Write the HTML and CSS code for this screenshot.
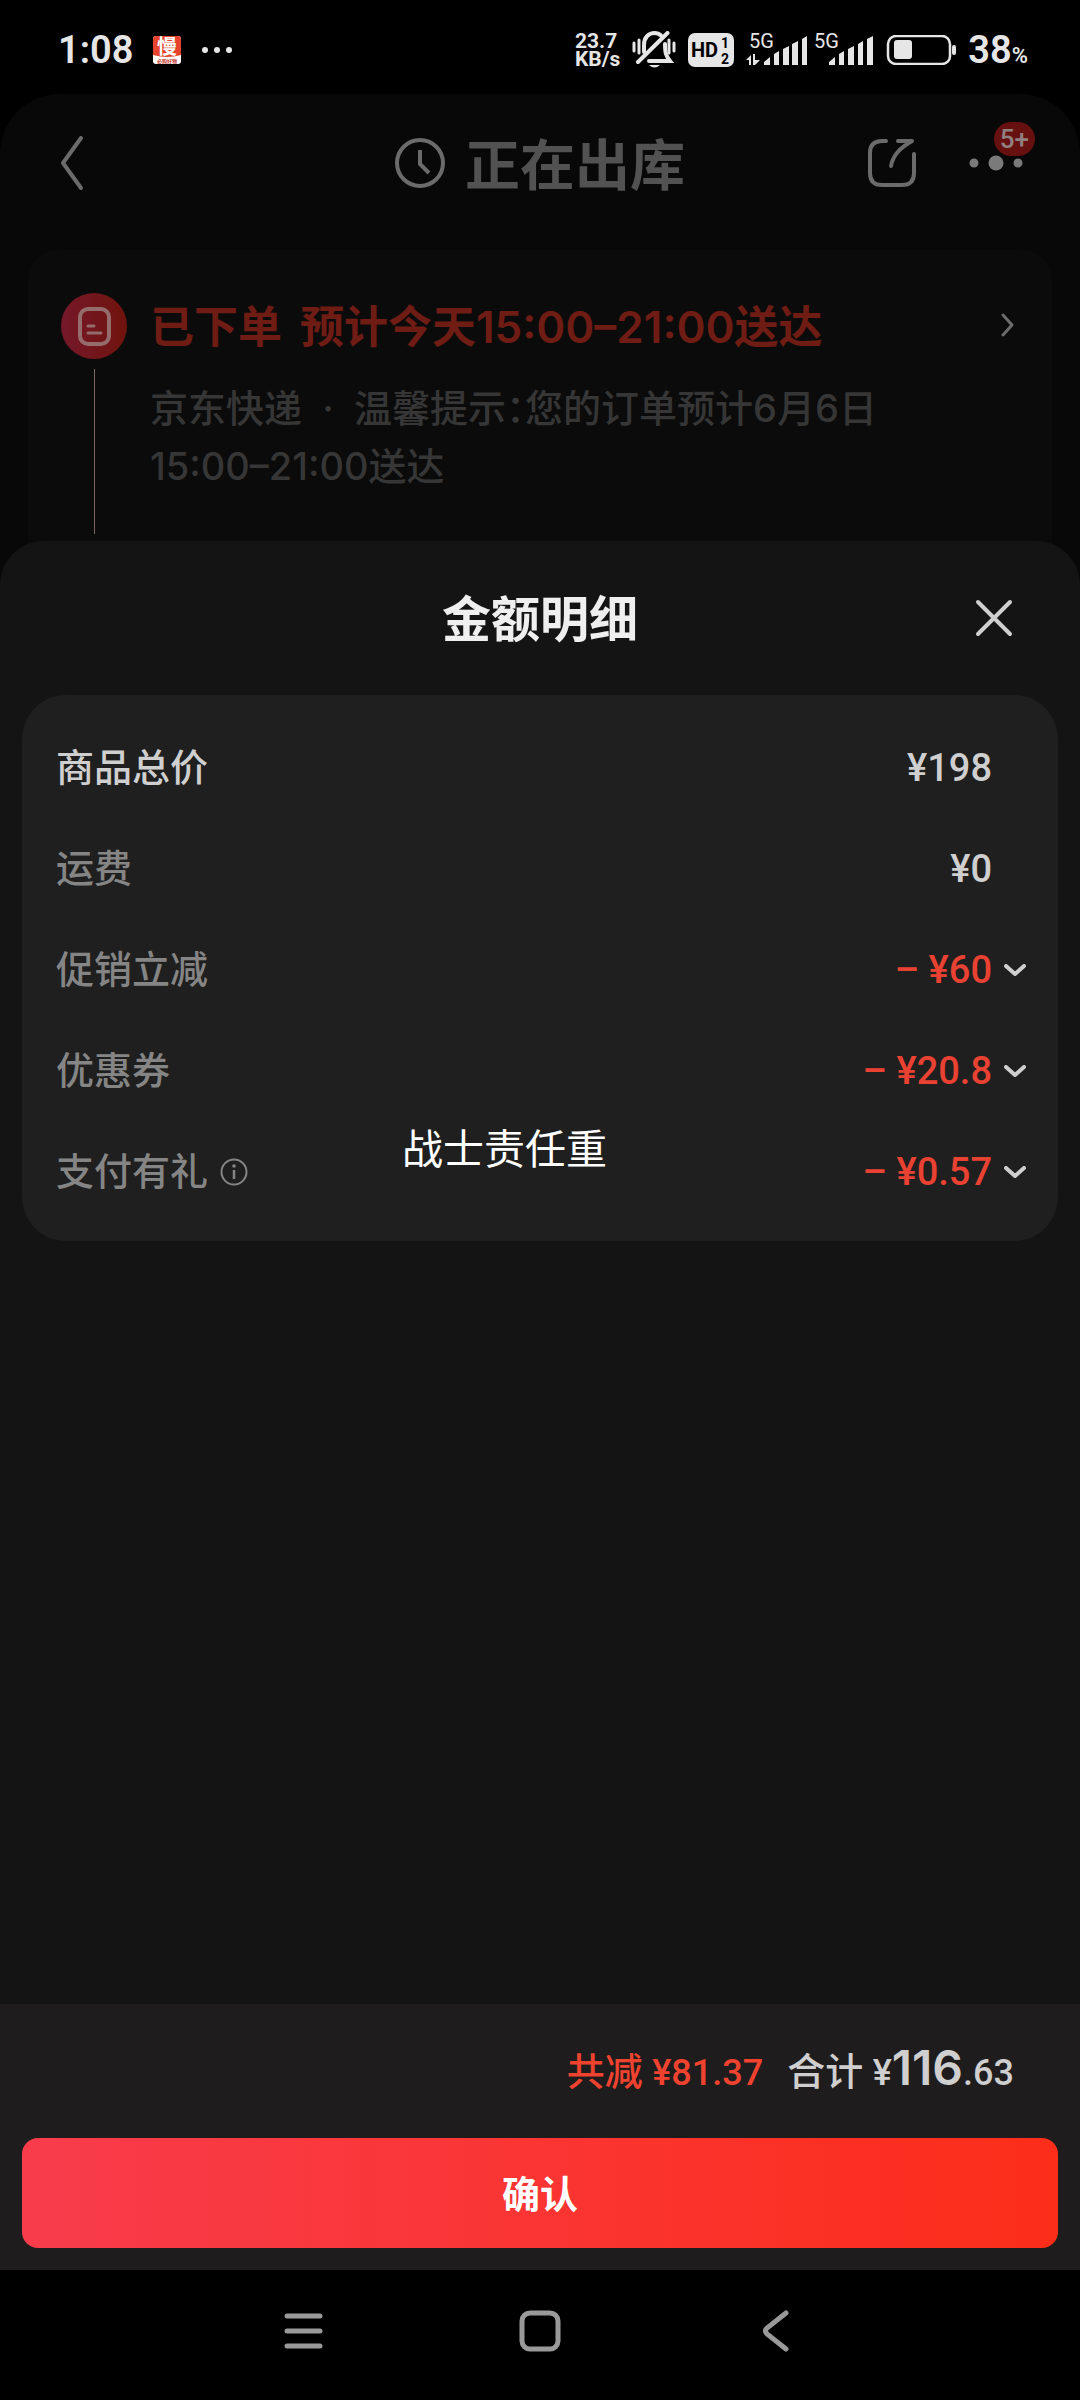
FILE: index.html
```html
<!DOCTYPE html>
<html lang="zh-CN">
<head>
  <meta charset="UTF-8">
  <meta name="viewport" content="width=device-width, initial-scale=1.0">
  <title>金额明细</title>
  <link rel="stylesheet" href="styles.css">
</head>
<body>
  <div class="status-bar">
    <div class="status-left">
      <span class="clock">1:08</span>
      <svg class="app-icon" width="28" height="28" viewBox="0 0 28 28">
        <rect width="28" height="28" rx="3" fill="#fff"/>
        <path d="M0 19V3a3 3 0 0 1 3-3h22a3 3 0 0 1 3 3v16q-14 4-28 0z" fill="#e5432c"/>
        <text x="14" y="18" font-size="20" font-weight="700" text-anchor="middle" fill="#fff">慢</text>
        <text x="14" y="27" font-size="5" font-weight="700" text-anchor="middle" fill="#c0392b">必购好物</text>
      </svg>
      <svg width="32" height="8" viewBox="0 0 32 8" fill="#e6e6e6">
        <circle cx="4" cy="4" r="3"/><circle cx="16" cy="4" r="3"/><circle cx="28" cy="4" r="3"/>
      </svg>
    </div>
    <div class="status-right">
      <div class="net-speed"><span>23.7</span><span>KB/s</span></div>
      <svg width="44" height="38" viewBox="0 0 44 38" fill="none" stroke="#e6e6e6" stroke-width="4" stroke-linecap="round">
        <path d="M2 12v8M7 9v13M37 9v13M42 12v8" stroke-width="3"/>
        <path d="M12 21V14C12 6 17 2 22.5 2c3 0 5 1 6.500 2.500"/>
        <path d="M33 13c0 9 1 12 5 17H17"/>
        <path d="M35.5 2L6 31"/>
        <path d="M17 34h11q-5.500 5-11 0z" fill="#e6e6e6" stroke="none"/>
      </svg>
      <svg width="46" height="34" viewBox="0 0 46 34">
        <rect width="46" height="34" rx="7" fill="#e6e6e6"/>
        <text x="3" y="24" font-size="20" font-weight="700">HD</text>
        <text x="33" y="15" font-size="14" font-weight="700">1</text>
        <text x="33" y="31" font-size="14" font-weight="700">2</text>
      </svg>
      <div class="signals">
        <svg width="62" height="42" viewBox="0 -4 62 42" fill="#e6e6e6">
          <text x="3" y="15" font-size="20">5G</text>
          <path d="M0 27l5-5v10H3v-5zM7 21h2v6h5l-5 5H7z"/>
          <path d="M18 32v-3l6-5v8zM28 32V21l5-3v14zM37 32V16l6-3v19zM46 32V11l6-3v24zM56 32V6l5-3v29z"/>
        </svg>
        <svg width="60" height="42" viewBox="0 -4 60 42" fill="#e6e6e6">
          <text x="0" y="15" font-size="20">5G</text>
          <path d="M15 32v-3l6-5v8zM25 32V21l5-3v14zM34 32V16l6-3v19zM44 32V11l5-3v24zM53 32V6l6-3v29z"/>
        </svg>
      </div>
      <svg width="70" height="30" viewBox="0 0 70 30">
        <rect x="2" y="1" width="62" height="28" rx="8" fill="none" stroke="#e6e6e6" stroke-width="2.5"/>
        <rect x="8" y="5" width="18" height="19" rx="3" fill="#e6e6e6"/>
        <rect x="66" y="10" width="4" height="10" rx="2" fill="#e6e6e6"/>
      </svg>
      <span class="battery-level">38<small>%</small></span>
    </div>
  </div>

  <main class="screen">
    <header class="order-header">
      <button class="icon-button" aria-label="返回">
        <svg width="24" height="54" viewBox="0 0 24 54" fill="none" stroke="#6b6b6b" stroke-width="4" stroke-linecap="round" stroke-linejoin="round">
          <path d="M21 2L3 27l18 25"/>
        </svg>
      </button>
      <h1 class="order-status">
        <svg width="50" height="50" viewBox="0 0 50 50" fill="none" stroke="#6b6b6b" stroke-width="4">
          <circle cx="25" cy="25" r="23"/>
          <path d="M25 12v14l9 9" stroke-linejoin="round"/>
        </svg>
        <span>正在出库</span>
      </h1>
      <div class="header-actions">
        <button class="icon-button" aria-label="分享">
          <svg width="50" height="50" viewBox="0 0 50 50" fill="none" stroke="#6b6b6b" stroke-width="4" stroke-linecap="round" stroke-linejoin="round">
            <path d="M19 3h-4Q3 3 3 15v20q0 12 12 12h20q12 0 12-12V16"/>
            <path d="M31 3h14C33 10 26 17 24 28"/>
          </svg>
        </button>
        <button class="icon-button more" aria-label="更多">
          <svg width="54" height="16" viewBox="0 0 54 16" fill="#7a7a7a">
            <circle cx="5" cy="8" r="4.500"/><circle cx="27" cy="8" r="7.500"/><circle cx="49" cy="8" r="4.500"/>
          </svg>
          <span class="badge">5+</span>
        </button>
      </div>
    </header>

    <section class="delivery-card">
      <div class="timeline">
        <svg width="66" height="66" viewBox="0 0 66 66">
          <defs>
            <linearGradient id="dot" x1="0" x2="1">
              <stop offset="0" stop-color="#75182a"/>
              <stop offset="1" stop-color="#70130d"/>
            </linearGradient>
          </defs>
          <circle cx="33" cy="33" r="33" fill="url(#dot)"/>
          <g fill="none" stroke="#946c6c" stroke-width="4" stroke-linecap="round">
            <rect x="19" y="16" width="29" height="35" rx="8"/>
            <path d="M27 33h6M27 40h13" stroke-width="3"/>
          </g>
        </svg>
        <span class="timeline-line"></span>
      </div>
      <div class="delivery-text">
        <h2><span>已下单</span> <span>预计今天15:00–21:00送达</span></h2>
        <p>京东快递&nbsp; · &nbsp;温馨提示：您的订单预计6月6日<br>15:00–21:00送达</p>
      </div>
      <svg class="delivery-arrow" width="14" height="24" viewBox="0 0 14 24" fill="none" stroke="#6b6b6b" stroke-width="3" stroke-linecap="round" stroke-linejoin="round">
        <path d="M3 2l9 10-9 10"/>
      </svg>
    </section>

    <section class="sheet" role="dialog" aria-labelledby="sheetTitle">
      <header class="sheet-header">
        <h2 id="sheetTitle">金额明细</h2>
        <button class="icon-button close-button" aria-label="关闭">
          <svg width="38" height="38" viewBox="0 0 38 38" stroke="#cfcfcf" stroke-width="4" stroke-linecap="round">
            <path d="M3 3l32 32M35 3L3 35"/>
          </svg>
        </button>
      </header>

      <ul class="amount-list">
        <li class="total">
          <span class="label">商品总价</span>
          <span class="amount">¥198</span>
        </li>
        <li>
          <span class="label">运费</span>
          <span class="amount">¥0</span>
        </li>
        <li class="discount">
          <span class="label">促销立减</span>
          <span class="amount">– ¥60</span>
          <button class="icon-button" aria-label="展开促销立减">
            <svg width="22" height="12" viewBox="0 0 22 12"><path d="M2 2l9 8 9-8"/></svg>
          </button>
        </li>
        <li class="discount">
          <span class="label">优惠券</span>
          <span class="amount">– ¥20.8</span>
          <button class="icon-button" aria-label="展开优惠券">
            <svg width="22" height="12" viewBox="0 0 22 12"><path d="M2 2l9 8 9-8"/></svg>
          </button>
        </li>
        <li class="discount">
          <span class="label">支付有礼
            <svg class="info" width="28" height="28" viewBox="0 0 28 28">
              <circle cx="14" cy="14" r="12.500" fill="none" stroke="#858585" stroke-width="2"/>
              <circle cx="14" cy="8" r="1.800" fill="#858585"/>
              <path d="M14 12v9" stroke="#858585" stroke-width="2.500"/>
            </svg>
          </span>
          <span class="amount">– ¥0.57</span>
          <button class="icon-button" aria-label="展开支付有礼">
            <svg width="22" height="12" viewBox="0 0 22 12"><path d="M2 2l9 8 9-8"/></svg>
          </button>
        </li>
        <li class="floating-text">战士责任重</li>
      </ul>

      <footer class="sheet-footer">
        <div class="summary">
          <span class="saved">共减 <span class="price">¥81.37</span></span>
          <span class="payable">合计 <span class="price">¥<b>116</b>.63</span></span>
        </div>
        <button class="confirm-button">确认</button>
      </footer>
    </section>
  </main>

  <nav class="nav-bar">
    <button class="icon-button" aria-label="最近任务">
      <svg width="42" height="42" viewBox="0 0 42 42" stroke="#999" stroke-width="5" stroke-linecap="round">
        <path d="M4 6h33M4 21h33M4 36h33"/>
      </svg>
    </button>
    <button class="icon-button" aria-label="主屏幕">
      <svg width="42" height="42" viewBox="0 0 42 42" fill="none" stroke="#999" stroke-width="5">
        <rect x="3" y="3" width="36" height="36" rx="8"/>
      </svg>
    </button>
    <button class="icon-button" aria-label="返回上一页">
      <svg width="42" height="42" viewBox="0 0 42 42" fill="none" stroke="#999" stroke-width="5" stroke-linecap="round">
        <path d="M31 3L12 18q-3 3 0 6l19 15"/>
      </svg>
    </button>
  </nav>
</body>
</html>
```

FILE: styles.css
```css
* {
  box-sizing: border-box;
  margin: 0;
  padding: 0;
}

body {
  display: flex;
  flex-direction: column;
  min-height: 100vh;
  background-color: #000;
  color: #cfcfcf;
  font-family: Roboto, "Noto Sans CJK SC", sans-serif;
  font-size: 38px;
}

svg {
  display: block;
  flex: none;
}

button {
  font-family: inherit;
  cursor: pointer;
}

.icon-button {
  background: none;
  border: none;
  display: flex;
  align-items: center;
  justify-content: center;
}

/* Status bar */
.status-bar {
  display: flex;
  justify-content: space-between;
  align-items: center;
  height: 94px;
  padding: 6px 52px 0 58px;
  color: #e6e6e6;
}

.status-left,
.status-right {
  display: flex;
  align-items: center;
  gap: 12px;
}

.status-left {
  gap: 20px;
}

.clock,
.battery-level {
  font-weight: 600;
}

.battery-level small {
  font-size: 22px;
}

.net-speed {
  display: flex;
  flex-direction: column;
  font-size: 21px;
  line-height: 18px;
  font-weight: 700;
}

.signals {
  display: flex;
  gap: 6px;
}

/* Order page behind the sheet */
.screen {
  position: relative;
  flex: 1;
  background-color: #080808;
  border-radius: 60px 60px 0 0;
}

.order-header {
  display: grid;
  grid-template-columns: 1fr auto 1fr;
  align-items: center;
  height: 138px;
  padding: 0 60px;
}

.order-header > .icon-button {
  justify-self: start;
}

.order-status {
  display: flex;
  align-items: center;
  gap: 20px;
  font-size: 55px;
  line-height: 60px;
  font-weight: 700;
  color: #525252;
}

.order-status span,
.sheet-header h2 {
  padding-top: 5px;
}

.header-actions {
  display: flex;
  justify-content: flex-end;
  gap: 52px;
}

.more {
  position: relative;
  margin-right: -3px;
}

.badge {
  position: absolute;
  right: -12px;
  bottom: 32px;
  padding: 0 6px;
  border-radius: 17px;
  background-color: #66100f;
  color: #918080;
  font-size: 26px;
  font-weight: 500;
  line-height: 34px;
}

.delivery-card {
  display: flex;
  align-items: flex-start;
  margin: 18px 28px 0;
  padding: 43px 38px 0 33px;
  height: 360px;
  border-radius: 30px;
  background-color: #0b0b0b;
}

.timeline {
  display: flex;
  flex-direction: column;
  align-items: center;
  gap: 10px;
}

.timeline-line {
  width: 1px;
  height: 165px;
  background-color: #7d655e;
}

.delivery-text {
  flex: 1;
  padding-left: 23px;
  font-family: Inter, "Noto Sans CJK SC", sans-serif;
}

.delivery-text h2 {
  display: flex;
  gap: 18px;
  font-size: 44px;
  line-height: 68px;
  font-weight: 600;
  color: #6e1c14;
}

.delivery-text p {
  margin-top: 18px;
  line-height: 58px;
  font-weight: 500;
  font-feature-settings: "halt";
  color: #363636;
}

.delivery-arrow {
  margin-top: 20px;
}

/* Amount sheet */
.sheet {
  position: absolute;
  inset: 447px 0 0;
  display: flex;
  flex-direction: column;
  border-radius: 44px 44px 0 0;
  background-color: #141414;
}

.sheet-header {
  display: grid;
  grid-template-columns: 1fr auto 1fr;
  align-items: center;
  height: 154px;
  padding: 0 67px;
}

.sheet-header h2 {
  grid-column: 2;
  font-size: 49px;
  line-height: 60px;
  font-weight: 700;
  color: #efefef;
}

.close-button {
  justify-self: end;
}

.amount-list {
  position: relative;
  margin: 0 22px;
  padding: 22px 32px 19px 34px;
  border-radius: 44px;
  background-color: #1f1f1f;
  list-style: none;
}

.amount-list li {
  display: grid;
  grid-template-columns: 1fr auto 22px;
  column-gap: 12px;
  align-items: center;
  height: 101px;
}

.label {
  display: flex;
  align-items: center;
  gap: 12px;
  line-height: 54px;
  font-weight: 500;
  color: #858585;
}

.total .label {
  color: #cfcfcf;
}

.amount {
  font-weight: 500;
}

.discount .amount {
  color: #ea4232;
}

.discount button path {
  fill: none;
  stroke: #cfcfcf;
  stroke-width: 4;
  stroke-linecap: round;
  stroke-linejoin: round;
}

.amount-list .floating-text {
  position: absolute;
  left: 380px;
  bottom: 61px;
  display: block;
  height: auto;
  font-size: 41px;
  line-height: 60px;
  color: #fff;
}

.sheet-footer {
  margin-top: auto;
  padding: 0 22px 22px;
  background-color: #1e1c1d;
}

.summary {
  display: flex;
  justify-content: flex-end;
  align-items: baseline;
  gap: 24px;
  height: 134px;
  padding-right: 44px;
  line-height: 128px;
  font-weight: 500;
}

.price {
  font-size: 36px;
}

.price b {
  font-family: Inter, sans-serif;
  font-size: 48px;
  font-weight: 600;
}

.saved {
  color: #f0432f;
}

.confirm-button {
  display: block;
  width: 100%;
  height: 110px;
  padding-bottom: 4px;
  border: none;
  border-radius: 16px;
  background: linear-gradient(90deg, #f83c4c, #fc2d19);
  color: #fff;
  font-size: 38px;
  font-weight: 700;
}

/* System navigation */
.nav-bar {
  display: flex;
  justify-content: center;
  gap: 194px;
  height: 130px;
  padding-bottom: 8px;
}
```
